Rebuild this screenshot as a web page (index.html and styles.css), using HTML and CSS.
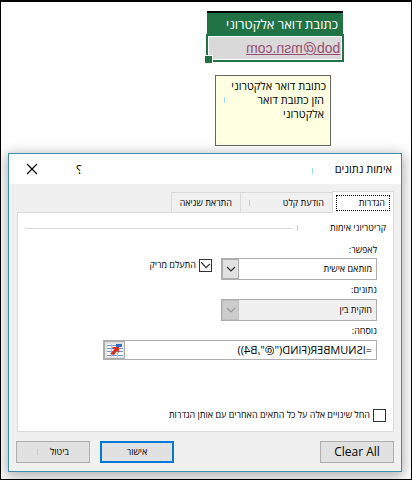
FILE: index.html
```
<!DOCTYPE html>
<html lang="he" dir="rtl">
  <head>
    <meta charset="utf-8">
    <title>אימות נתונים</title>
    <meta name="viewport" content="width=device-width, initial-scale=1">
    <link rel="stylesheet" href="styles.css">
  </head>
  <body>
    <div class="sheet">
      <table class="cells">
        <tr><th>כתובת דואר אלקטרוני</th></tr>
        <tr>
          <td><a class="mirror" dir="ltr" href="mailto:bob@msn.com">bob@msn.com</a></td>
        </tr>
      </table>
      <div class="note">
        <div>כתובת דואר אלקטרוני</div>
        <div class="note-text"><span>הזן כתובת דואר<br>אלקטרוני</span><i class="mark"></i></div>
      </div>
    </div>

    <form class="dialog">
      <header class="titlebar">
        <h1>אימות נתונים</h1>
        <i class="mark"></i>
        <div class="window-buttons">
          <button type="button" class="mirror" aria-label="עזרה">?</button>
          <button type="button" aria-label="סגור">
            <svg width="12" height="12" viewBox="0 0 12 12">
              <path d="M1 1L11 11M11 1L1 11" stroke="#000" stroke-width="1.2" fill="none" />
            </svg>
          </button>
        </div>
      </header>

      <div class="tabs">
        <button type="button" class="tab active"><span>הגדרות</span></button>
        <button type="button" class="tab wide"><span>הודעת קלט</span><i class="mark"></i></button>
        <button type="button" class="tab">התראת שגיאה</button>
      </div>

      <div class="panel">
        <h2><span>קריטריוני אימות</span><i class="mark"></i></h2>
        <div class="fields">
          <label for="allow">לאפשר:</label>
          <div class="row">
            <div class="select">
              <select id="allow"><option>מותאם אישית</option></select>
              <span class="arrow">
                <svg width="10" height="6" viewBox="0 0 10 6">
                  <path d="M1 1L5 5L9 1" stroke="currentColor" stroke-width="1.2" fill="none" />
                </svg>
              </span>
            </div>
            <label class="check"><input type="checkbox" checked>התעלם מריק</label>
          </div>
          <label for="data">נתונים:</label>
          <div class="row">
            <div class="select disabled">
              <select id="data" disabled><option>חוקית בין</option></select>
              <span class="arrow">
                <svg width="10" height="6" viewBox="0 0 10 6">
                  <path d="M1 1L5 5L9 1" stroke="currentColor" stroke-width="1.2" fill="none" />
                </svg>
              </span>
            </div>
          </div>
          <label for="formula">נוסחה:</label>
          <div class="formula">
            <input class="mirror" id="formula" dir="ltr" type="text" value='=ISNUMBER(FIND("@",B4))'>
            <button type="button" aria-label="בחר טווח">
              <svg width="16" height="13" viewBox="0 0 16 13">
                <rect width="16" height="13" fill="#fff" />
                <path d="M0 1.5H9M0 4.5H16M0 7.5H16M0 11.5H16" stroke="#6f93cf" />
                <path d="M4.5 0V13M10.5 3V13" stroke="#a9c0e4" />
                <path d="M9 0H15V3H9Z" fill="#3a6bc8" />
                <path d="M5 3H12V9L10 7L7 11L3 10L7 6Z" fill="#d8321e" />
              </svg>
            </button>
          </div>
        </div>
        <label class="check apply"><input type="checkbox">החל שינויים אלה על כל התאים האחרים עם אותן הגדרות</label>
      </div>

      <footer class="actions">
        <button type="reset" class="clear" dir="ltr">Clear All</button>
        <button type="submit" class="ok">אישור</button>
        <button type="button"><span>ביטול</span><i class="mark"></i></button>
      </footer>
    </form>
  </body>
</html>
```

FILE: styles.css
```
* {
  box-sizing: border-box;
}
body {
  margin: 0;
  min-height: 100vh;
  padding: 9px 9px 7px 7px;
  border: 1px solid #000;
  border-top-width: 2px;
  background: #fff;
  color: #000;
  font-family: "Open Sans", "Liberation Sans", sans-serif;
  font-size: 9px;
  line-height: 14px;
}
button,
input,
select {
  margin: 0;
  font: inherit;
  color: inherit;
}
.mirror {
  transform: scaleX(-1);
}
.mark {
  width: 1px;
  height: 6px;
  background: #9cdcf2;
}

/* worksheet */
.sheet {
  padding-right: 58px;
}
.cells {
  position: relative;
  width: 138px;
  border-collapse: collapse;
}
.cells th {
  height: 23px;
  padding: 0 5px;
  border-top: 2px solid #000;
  background: #217346;
  color: #fff;
  font-size: 13px;
  font-weight: normal;
  text-align: right;
  white-space: nowrap;
}
.cells td {
  height: 26px;
  padding: 0 2px;
  border: 2px solid #217346;
  background: #d9d9d9;
  box-shadow: inset 0 0 0 1px #fff;
  font-family: "Liberation Sans", sans-serif;
  font-size: 14px;
}
.cells a {
  display: inline-block;
  color: #954f72;
}
.cells::after {
  content: "";
  position: absolute;
  left: -2px;
  bottom: -1px;
  width: 7px;
  height: 7px;
  border: 1px solid #fff;
  border-width: 1px 1px 0 0;
  background: #217346;
}
.note {
  width: 116px;
  height: 71px;
  margin: 13px 13px 0 0;
  padding: 3px 4px;
  border: 1px solid #666;
  background: #ffffe1;
  font-size: 11px;
  white-space: nowrap;
}
.note-text {
  display: flex;
  justify-content: space-between;
  padding: 0 2px 0 4px;
}
.note-text .mark {
  margin-top: 4px;
}

/* dialog */
.dialog {
  margin-top: 7px;
  border: 1px solid #3c8dab;
  background: #f0f0f0;
  box-shadow: 0 3px 12px 2px rgba(0, 0, 0, 0.3);
}
.titlebar {
  display: flex;
  align-items: center;
  height: 30px;
  padding: 0 9px 0 17px;
  background: #fff;
}
.titlebar h1 {
  margin: 0;
  font-size: 11px;
  font-weight: normal;
}
.titlebar .mark {
  margin: 4px 22px 0 0;
}
.window-buttons {
  display: flex;
  gap: 38px;
  margin-right: auto;
}
.window-buttons button {
  display: flex;
  align-items: center;
  padding: 0;
  border: 0;
  background: none;
  font-size: 13px;
}
.tabs {
  display: flex;
  align-items: flex-end;
  height: 28px;
  padding: 0 7px;
}
.tab {
  height: 20px;
  padding: 0 8px;
  border: 1px solid #dadada;
  border-right: 0;
  border-bottom: 0;
  background: #f0f0f0;
  text-align: right;
  white-space: nowrap;
}
.tab.wide {
  display: flex;
  align-items: center;
  justify-content: space-between;
  width: 92px;
}
.tab.active {
  z-index: 1;
  width: 62px;
  height: 22px;
  margin-bottom: -1px;
  padding: 0 3px;
  border-right: 1px solid #dadada;
  background: #fff;
}
.tab.active span {
  display: block;
  padding: 0 4px;
  border: 1px dotted #000;
}
.panel {
  display: flex;
  flex-direction: column;
  margin: 0 7px 0 8px;
  min-height: 220px;
  padding: 8px 7px 9px;
  border: 1px solid #dadada;
  background: #fff;
}
.panel h2 {
  display: flex;
  align-items: center;
  margin: 0 0 7px;
  font-size: 9px;
  font-weight: normal;
}
.panel h2 .mark {
  margin-right: 32px;
}
.panel h2::after {
  content: "";
  flex: 1;
  height: 1px;
  margin-right: 4px;
  background: #dadada;
}
.fields {
  display: grid;
  grid-template-rows: 16px 22px 19px 22px 19px 20px;
  align-items: center;
  padding-right: 9px;
}
.row {
  display: flex;
  align-items: flex-start;
  gap: 9px;
}
.select {
  display: flex;
  width: 156px;
  height: 22px;
  border: 1px solid #adadad;
  background: #fff;
}
.select select {
  flex: 1;
  padding: 0 4px;
  border: 0;
  background: none;
  appearance: none;
  opacity: 1;
}
.arrow {
  display: flex;
  align-items: center;
  justify-content: center;
  width: 17px;
  border: 1px solid #adadad;
  background: #e1e1e1;
  color: #333;
  pointer-events: none;
}
.select.disabled {
  background: #f0f0f0;
}
.disabled .arrow {
  border-color: #bfbfbf;
  background: #ccc;
  color: #999;
}
.check {
  display: flex;
  align-items: center;
  gap: 3px;
  white-space: nowrap;
}
.check input {
  display: flex;
  align-items: center;
  justify-content: center;
  width: 13px;
  height: 13px;
  border: 1px solid #333;
  background: #fff;
  appearance: none;
}
.check input:checked::before {
  content: "";
  width: 10px;
  height: 7px;
  background: #333;
  clip-path: polygon(0 0, 10% 0, 55% 75%, 90% 30%, 100% 40%, 55% 100%, 0 15%);
}
.formula {
  display: flex;
  height: 20px;
  margin-left: 78px;
  border: 1px solid #adadad;
}
.formula input {
  flex: 1;
  min-width: 0;
  padding: 0 4px;
  border: 0;
  background: none;
  font-size: 11px;
}
.formula button {
  display: flex;
  align-items: center;
  justify-content: center;
  width: 21px;
  padding: 0;
  border: 1px solid #adadad;
  background: #e1e1e1;
}
.apply {
  margin-top: auto;
}
.actions {
  display: flex;
  gap: 10px;
  padding: 9px 7px 8px;
}
.actions button {
  display: flex;
  align-items: center;
  justify-content: center;
  width: 74px;
  height: 22px;
  padding: 0;
  border: 1px solid #adadad;
  background: #e1e1e1;
}
.actions .clear {
  margin-left: auto;
  font-size: 12px;
}
.actions .ok {
  border: 2px solid #0078d7;
}
.actions .mark {
  margin-right: 12px;
}
```
